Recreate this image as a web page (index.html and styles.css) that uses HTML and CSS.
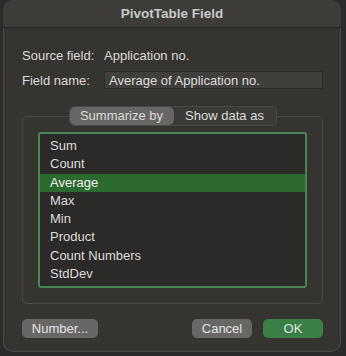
FILE: index.html
```html
<!DOCTYPE html>
<html>
<head>
<meta charset="utf-8">
<link rel="stylesheet" href="styles.css">
</head>
<body>
<div class="dialog">
  <div class="titlebar">PivotTable Field</div>
  <div class="content">
    <div class="row">
      <span class="label">Source field:</span>
      <span class="value">Application no.</span>
    </div>
    <div class="row row-input">
      <span class="label">Field name:</span>
      <span class="field">Average of Application no.</span>
    </div>
    <div class="group">
      <div class="tabs">
        <div class="seg">
          <span class="tab tab-on">Summarize by</span>
          <span class="tab">Show data as</span>
        </div>
      </div>
      <ul class="list">
        <li>Sum</li>
        <li>Count</li>
        <li class="sel">Average</li>
        <li>Max</li>
        <li>Min</li>
        <li>Product</li>
        <li>Count Numbers</li>
        <li>StdDev</li>
      </ul>
    </div>
    <div class="buttons">
      <span class="btn btn-num">Number...</span>
      <span class="spacer"></span>
      <span class="btn">Cancel</span>
      <span class="btn btn-ok">OK</span>
    </div>
  </div>
</div>
</body>
</html>
```
FILE: styles.css
```css
body {
    margin: 0;
    background: #2b2b2a;
    font-family: "Liberation Sans", Arial, sans-serif;
    font-size: 13px;
    color: #dcdcdc;
}

.dialog {
    margin-left: 3px;
    width: 338px;
    height: 352px;
    background: #353431;
    border-radius: 10px;
    box-shadow: inset 0 0 0 1px #4a4946;
    overflow: hidden;
}

.titlebar {
    height: 27px;
    line-height: 28px;
    text-align: center;
    background: #3d3c39;
    border-bottom: 1px solid #272624;
    font-weight: bold;
    font-size: 13.5px;
    color: #c9c9c9;
}

.content {
    padding: 19px 18px 0 19px;
}

.row {
    display: flex;
    align-items: center;
    height: 16px;
}

.label {
    width: 82px;
}

.row-input {
    margin-top: 8px;
    height: 18px;
}

.field {
    flex: 1;
    height: 18px;
    line-height: 18px;
    padding-left: 4px;
    background: #403f3c;
    border: 1px solid #2d2c2a;
    box-sizing: border-box;
}

.group {
    margin-top: 27px;
    height: 188px;
    border: 1px solid #4a4946;
    border-radius: 5px;
    box-sizing: border-box;
}

.tabs {
    display: flex;
    justify-content: center;
    margin-top: -11px;
}

.seg {
    display: flex;
    height: 20px;
    background: #3b3a37;
    border: 1px solid #4a4946;
    border-radius: 5px;
    box-sizing: border-box;
}

.tab {
    width: 102px;
    line-height: 18px;
    text-align: center;
}

.tab-on {
    width: 104px;
    background: #676664;
    border-radius: 5px;
}

.list {
    list-style: none;
    margin: 6px 15px 0 15px;
    padding: 3px 0 0 0;
    height: 156px;
    box-sizing: border-box;
    background: #2b2a28;
    border: 2px solid #4a8553;
    border-radius: 3px;
}

.list li {
    height: 18.3px;
    line-height: 18px;
    padding-left: 10px;
}

.list li.sel {
    background: #2d6a30;
    color: #f0f0f0;
}

.buttons {
    display: flex;
    gap: 11px;
    margin-top: 15px;
}

.spacer {
    flex: 1;
}

.btn {
    width: 60px;
    height: 19px;
    line-height: 19px;
    text-align: center;
    background: #686765;
    border-radius: 5px;
    color: #e4e4e4;
}

.btn-num {
    width: 76px;
}

.btn-ok {
    background: #3a7f45;
}
```
